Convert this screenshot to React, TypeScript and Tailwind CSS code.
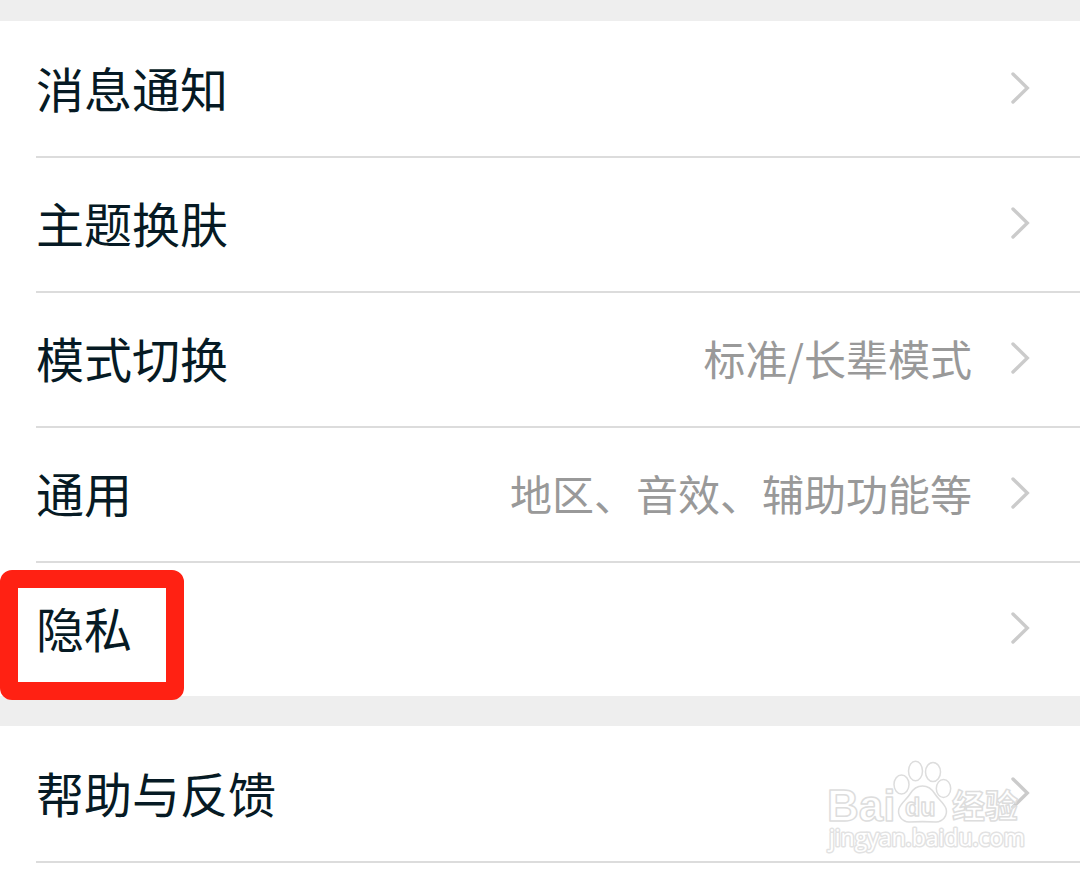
import React from 'react';

interface SettingItem {
  label: string;
  value?: string;
  highlighted?: boolean;
}

const generalItems: SettingItem[] = [
  { label: '消息通知' },
  { label: '主题换肤' },
  { label: '模式切换', value: '标准/长辈模式' },
  { label: '通用', value: '地区、音效、辅助功能等' },
  { label: '隐私', highlighted: true },
];

const supportItems: SettingItem[] = [{ label: '帮助与反馈' }];

const Chevron: React.FC = () => (
  <svg
    width="20"
    height="32"
    viewBox="0 0 20 32"
    fill="none"
    stroke="#cbcbcb"
    strokeWidth="3.4"
    strokeLinecap="round"
    aria-hidden="true"
    className="shrink-0"
  >
    <path d="M3 2 17.300 16 3 30" />
  </svg>
);

const SettingRow: React.FC<{ item: SettingItem }> = ({ item }) => (
  <li className="relative ml-9 border-t-2 border-[#dcdcdc] first:border-t-0">
    <button
      type="button"
      className="flex h-[133px] w-full items-center pr-[50px] pb-1 text-left in-[li:first-child]:h-[135px] in-[li:first-child]:pb-[2px]"
    >
      <span className="flex-1 pb-[2px] text-[48px] leading-[72px] text-[#061a24]">{item.label}</span>
      {item.value && (
        <span className="mr-[38px] text-[42px] leading-[64px] text-[#999999]">{item.value}</span>
      )}
      <Chevron />
    </button>
    {/* Marco rojo sobre la opción destacada */}
    {item.highlighted && (
      <div className="pointer-events-none absolute top-[7px] -left-9 z-10 h-[130px] w-[184px] rounded-xl border-[18px] border-[#ff2113]" />
    )}
  </li>
);

const Watermark: React.FC = () => (
  <svg
    width="202"
    height="98"
    viewBox="0 0 202 98"
    className="pointer-events-none absolute top-[30px] right-[54px]"
    fill="#ffffff"
    fillOpacity="0.4"
    stroke="#dddddd"
    strokeWidth="1.5"
    strokeLinejoin="round"
  >
    <text x="3" y="65" fontSize="44" fontWeight="700" fontFamily="Liberation Sans, sans-serif">
      Bai
    </text>
    <ellipse cx="77.5" cy="28.5" rx="7.5" ry="9.5" />
    <ellipse cx="91.5" cy="15" rx="7" ry="9.800" />
    <ellipse cx="109" cy="16" rx="7.5" ry="9.500" />
    <ellipse cx="119.5" cy="32.5" rx="7.2" ry="9" />
    <path d="M98.500 30c-6 0-9.500 3-12.500 8-3 5-9 9-11 14.500-2 7 3 13 10 13.500 9-.5 18-.5 27 0 7-.5 12-6.500 10-13.500-2-5.500-8-9.500-11-14.500-3-5-6.500-8-12.500-8Z" />
    <text x="81" y="60" fontSize="25" fontFamily="Liberation Sans, sans-serif" fontWeight="700">
      du
    </text>
    <text x="128" y="62" fontSize="33" fontWeight="700" fontFamily="Noto Sans CJK SC, sans-serif">
      经验
    </text>
    <text
      x="5"
      y="90"
      fontSize="23"
      fontFamily="Open Sans, sans-serif"
      fillOpacity="1"
      strokeWidth="3"
      stroke="#e2e2e2"
      paintOrder="stroke"
    >
      jingyan.baidu.com
    </text>
  </svg>
);

const App: React.FC = () => {
  return (
    <main
      lang="zh-CN"
      className="min-h-screen overflow-hidden bg-white font-['Noto_Sans_CJK_SC',sans-serif]"
    >
      <div className="h-[21px] bg-[#eeeeee]" />
      <ul>
        {generalItems.map((item) => (
          <SettingRow key={item.label} item={item} />
        ))}
      </ul>
      <div className="h-[30px] bg-[#eeeeee]" />
      <section className="relative">
        <ul>
          {supportItems.map((item) => (
            <SettingRow key={item.label} item={item} />
          ))}
        </ul>
        <div className="ml-9 border-t-2 border-[#dcdcdc]" />
        <Watermark />
      </section>
    </main>
  );
};

export default App;
